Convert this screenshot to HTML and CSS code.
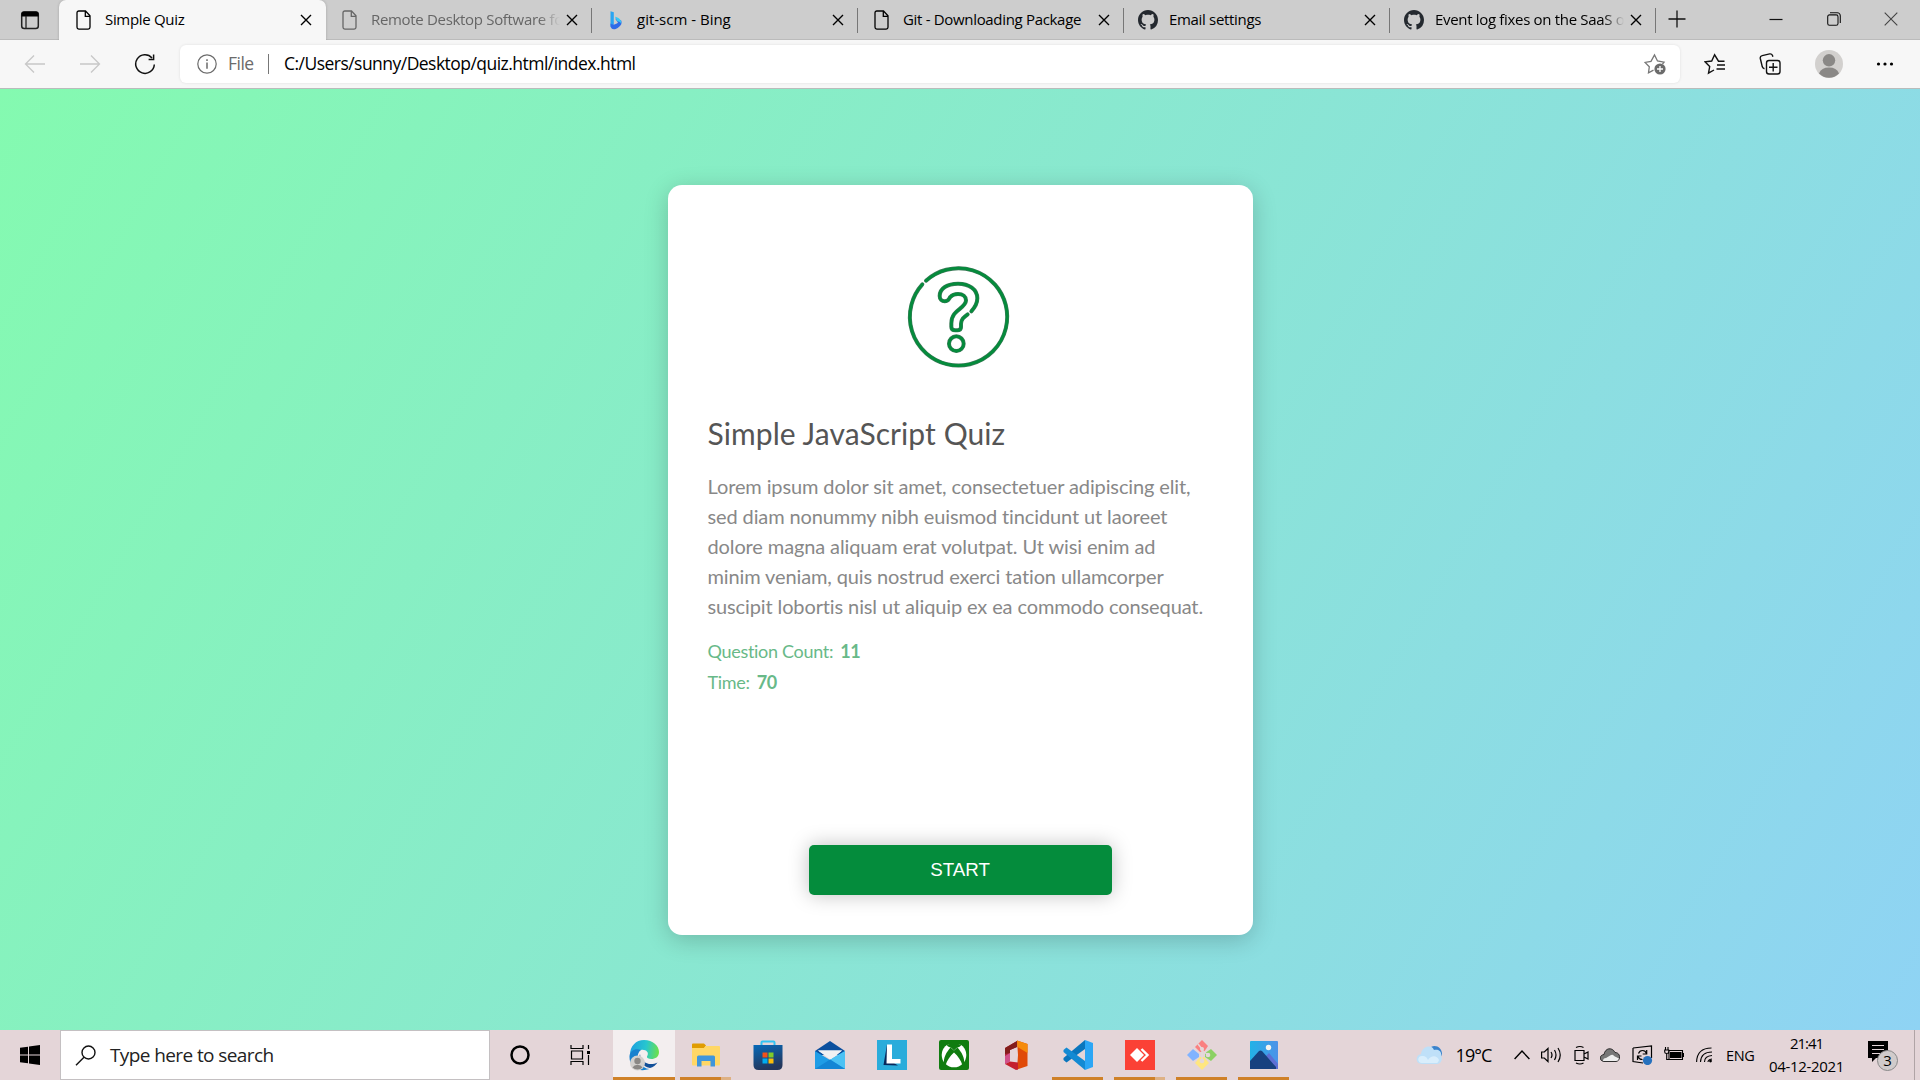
FILE: index.html
```html
<!DOCTYPE html>
<html lang="en">
<head>
<meta charset="utf-8">
<title>Simple Quiz</title>
<link rel="stylesheet" href="styles.css">
</head>
<body>
<svg class="defs" width="0" height="0">
  <defs>
    <symbol id="i-page" viewBox="0 0 20 20"><path d="M4.8 1h6.7L16 5.8V17.300a1.800 1.800 0 0 1-1.800 1.800H4.800A1.800 1.800 0 0 1 3 17.300V2.800A1.800 1.800 0 0 1 4.800 1zM11.300 1.200V6.300H16" fill="none" stroke="currentColor" stroke-width="1.300"/></symbol>
    <symbol id="i-close" viewBox="0 0 12 12"><path d="M1 1l10 10M11 1L1 11" stroke="currentColor" stroke-width="1.400" fill="none"/></symbol>
    <symbol id="i-bing" viewBox="0 0 20 20"><path d="M4.500 1.200l3.300 1.100v12l-3.300 3z" fill="#2aa5f2"/><path d="M4.500 13.500c2 2 5 1 7.500-.7l-3-4.300 6.200 2.100c1.200 3.400-.9 5.600-3.500 7.300-4.200 2.600-7.200 1-7.200-3z" fill="#2f6be8"/><path d="M9 6.800c3 .8 6.600 2.400 6.300 6.600-1-1.800-2.700-1.800-4.300-2.500z" fill="#35c8f5"/></symbol>
    <symbol id="i-github" viewBox="0 0 16 16"><path fill="#24292f" d="M8 0C3.580 0 0 3.580 0 8c0 3.540 2.290 6.530 5.470 7.590.4.070.55-.17.55-.38 0-.19-.01-.82-.01-1.490-2.010.37-2.530-.49-2.690-.94-.09-.23-.48-.94-.82-1.130-.28-.15-.68-.52-.01-.53.63-.01 1.080.58 1.230.82.72 1.210 1.870.87 2.330.66.07-.52.28-.87.51-1.070-1.780-.2-3.640-.89-3.640-3.950 0-.87.31-1.590.82-2.150-.08-.2-.36-1.020.08-2.120 0 0 .67-.21 2.200.82.64-.18 1.320-.27 2-.27s1.360.09 2 .27c1.530-1.040 2.200-.82 2.200-.82.44 1.100.16 1.920.08 2.120.51.56.82 1.270.82 2.150 0 3.070-1.870 3.750-3.650 3.950.29.25.54.73.54 1.480 0 1.070-.01 1.930-.01 2.200 0 .21.15.46.55.38A8.010 8.010 0 0 0 16 8c0-4.420-3.580-8-8-8z"/></symbol>
    <symbol id="i-question" viewBox="0 0 480 390"><path d="M141 92A146 146 0 1 1 130 103"/><path d="M277 184C290 170 295 160 295 145C295 118 270 101 237 101C205 101 182 115 182 138C182 148 189 154 197 154C210 154 209 146 214 141C220 134 228 132 237 132C252 132 261 140 261 151C261 176 217 178 217 220V231C217 238 222 241 229 241H235C243 241 246 237 246 231V222C246 208 254 202 266 193"/><circle cx="232" cy="281" r="22"/></symbol>
  </defs>
</svg>

<header class="browser">
  <div class="tabs">
    <div class="workspaces"><svg width="20" height="20" viewBox="0 0 20 20"><rect x="1.700" y="2" width="16.600" height="16.500" rx="2.500" fill="none" stroke="#222" stroke-width="1.500"/><path d="M1.500 6V4.500A2.500 2.500 0 0 1 4 1.500h12a2.500 2.500 0 0 1 2.500 3V6.500h-17z" fill="#000"/><path d="M6 6v12" stroke="#222" stroke-width="1.300"/></svg></div>
    <div class="tab active"><svg class="fav"><use href="#i-page"/></svg><span class="label">Simple Quiz</span><svg class="x"><use href="#i-close"/></svg></div>
    <div class="tab dim"><svg class="fav"><use href="#i-page"/></svg><span class="label fade">Remote Desktop Software for</span><svg class="x"><use href="#i-close"/></svg></div>
    <div class="tab"><svg class="fav"><use href="#i-bing"/></svg><span class="label loose">git-scm - Bing</span><svg class="x"><use href="#i-close"/></svg></div>
    <div class="tab"><svg class="fav"><use href="#i-page"/></svg><span class="label">Git - Downloading Package</span><svg class="x"><use href="#i-close"/></svg></div>
    <div class="tab"><svg class="fav"><use href="#i-github"/></svg><span class="label">Email settings</span><svg class="x"><use href="#i-close"/></svg></div>
    <div class="tab"><svg class="fav"><use href="#i-github"/></svg><span class="label fade">Event log fixes on the SaaS o</span><svg class="x"><use href="#i-close"/></svg></div>
    <div class="newtab"><svg width="18" height="18" viewBox="0 0 18 18"><path d="M9 .5v17M.5 9h17" stroke="#111" stroke-width="1.300"/></svg></div>
    <div class="window-buttons">
      <svg width="14" height="14" viewBox="0 0 14 14"><path d="M.5 7.500h13" stroke="#111" stroke-width="1.200"/></svg>
      <svg width="14" height="14" viewBox="0 0 14 14"><rect x=".7" y="2.900" width="10.300" height="10.300" rx="1.800" fill="none" stroke="#111" stroke-width="1.100"/><path d="M3 .8h7.300a3 3 0 0 1 3 3V11" fill="none" stroke="#111" stroke-width="1.100"/></svg>
      <svg width="14" height="14" viewBox="0 0 14 14"><path d="M.7.7l12.600 12.600M13.300.7L.7 13.300" stroke="#444" stroke-width="1.100"/></svg>
    </div>
  </div>
  <div class="toolbar">
    <nav class="nav">
      <svg width="22" height="20" viewBox="0 0 22 20" class="off"><path d="M21 10H1.500M10 1.500L1.500 10l8.500 8.500" fill="none" stroke="currentColor" stroke-width="1.300"/></svg>
      <svg width="22" height="20" viewBox="0 0 22 20" class="off"><path d="M1 10h19.500M12 1.500l8.500 8.500-8.500 8.500" fill="none" stroke="currentColor" stroke-width="1.300"/></svg>
      <svg width="22" height="22" viewBox="0 0 22 22"><path d="M20.300 11.500A9.300 9.300 0 1 1 18 4.900M19.600 1.500v5h-5" fill="none" stroke="#111" stroke-width="1.500"/></svg>
    </nav>
    <div class="address">
      <svg width="20" height="20" viewBox="0 0 20 20"><circle cx="10" cy="10" r="9.200" fill="none" stroke="#6b6b6b" stroke-width="1.200"/><path d="M10 8.500v6.200M10 5.200v1.700" stroke="#6b6b6b" stroke-width="1.500"/></svg>
      <span class="scheme">File</span><i class="bar"></i><span class="url">C:/Users/sunny/Desktop/quiz.html/index.html</span>
      <svg class="star" width="22" height="22" viewBox="0 0 22 22"><path d="M9.500 17.200L4.500 19.800l.8-6L1 9.400l6-1.100L10.500 2l3 6 6.500 1.200-1.500 1.800" fill="none" stroke="#767676" stroke-width="1.300"/><circle cx="16" cy="16" r="5.600" fill="#6b6b6b"/><path d="M16 13v6M13 16h6" stroke="#fff" stroke-width="1.300"/></svg>
    </div>
    <div class="actions">
      <svg width="22" height="22" viewBox="0 0 22 22"><path d="M20.500 8.200h-6L10.600 1.800 7.700 8 1.200 8.900l4.500 4.600-1.200 6.700L10 17M13 12h8M12.500 16h8.500" fill="none" stroke="#111" stroke-width="1.400"/></svg>
      <svg width="22" height="22" viewBox="0 0 22 22"><path d="M5.500 15.800A3 3 0 0 1 3.300 13.800L1.300 5.500a2.500 2.500 0 0 1 1.900-2.900l7.500-1.700a2.500 2.500 0 0 1 2.700 1.400l.5 1.400" fill="none" stroke="#111" stroke-width="1.400"/><rect x="7.500" y="7.500" width="13.500" height="13.500" rx="2.500" fill="none" stroke="#111" stroke-width="1.400"/><path d="M14.200 10v8.500M10 14.200h8.500" stroke="#111" stroke-width="1.400"/></svg>
      <svg width="28" height="28" viewBox="0 0 28 28"><circle cx="14" cy="14" r="14" fill="#d2d0ce"/><circle cx="14" cy="10.300" r="6.200" fill="#8a8886"/><path d="M4 23.500a10.500 8.500 0 0 1 20 0 14 14 0 0 1-20 0z" fill="#8a8886"/></svg>
      <svg width="18" height="6" viewBox="0 0 18 6"><circle cx="2.500" cy="3" r="1.600"/><circle cx="9" cy="3" r="1.600"/><circle cx="15.500" cy="3" r="1.600"/></svg>
    </div>
  </div>
</header>

<main class="page">
  <section class="card">
    <svg class="question" width="160" height="130"><use class="edge" href="#i-question"/><use class="core" href="#i-question"/></svg>
    <h1>Simple JavaScript Quiz</h1>
    <p>Lorem ipsum dolor sit amet, consectetuer adipiscing elit,<br>sed diam nonummy nibh euismod tincidunt ut laoreet<br>dolore magna aliquam erat volutpat. Ut wisi enim ad<br>minim veniam, quis nostrud exerci tation ullamcorper<br>suscipit lobortis nisl ut aliquip ex ea commodo consequat.</p>
    <div class="info"><span>Question Count:</span><b>11</b></div>
    <div class="info"><span>Time:</span><b>70</b></div>
    <button class="start">START</button>
  </section>
</main>

<footer class="taskbar">
  <div class="win"><svg width="20" height="20" viewBox="0 0 20 20"><path d="M0 2.800L8 1.700V9.500H0zM9 1.500L20 0v9.500H9zM0 10.500h8v7.800L0 17.200zM9 10.500h11V20L9 18.500z"/></svg></div>
  <div class="search"><svg width="21" height="21" viewBox="0 0 21 21"><circle cx="13.500" cy="7.500" r="6.500" fill="none" stroke="#111" stroke-width="1.400"/><path d="M9 12.300L1 20.300" stroke="#111" stroke-width="1.500"/></svg><span>Type here to search</span></div>
  <div class="sys"><svg width="20" height="20" viewBox="0 0 20 20"><circle cx="10" cy="10" r="8.500" fill="none" stroke="#000" stroke-width="2.500"/></svg></div>
  <div class="sys"><svg width="21" height="20" viewBox="0 0 21 20"><path d="M1 0v3.500h12V0M1 20v-3.500h12V20M1.500 6h11v8h-11zM18.500 0v4M18.500 10v10" fill="none" stroke="#000" stroke-width="1.200"/><path d="M17 6h3v3h-3z"/></svg></div>
  <div class="apps">
    <div class="app on"><svg width="32" height="32" viewBox="0 0 32 32"><defs><linearGradient id="eg" x1="0" y1=".3" x2="1" y2=".4"><stop offset="0" stop-color="#1c9fe0"/><stop offset=".55" stop-color="#27c6cf"/><stop offset="1" stop-color="#6be04c"/></linearGradient></defs><path d="M2 16C2 7 8 1 16 1c9 0 15 6 15 12 0 5-4 7-7.500 7-3 0-5-1-4.500-2.500C22 13 17 10 13 11 6 12 2 14 2 16z" fill="url(#eg)"/><path d="M1.500 17C2 11 8 9 13 11c-4 3-4 8-1.500 12 2 4 6 7 10 7C9 34 1 27 1.500 17z" fill="#1781cf"/><path d="M12 15c-2 5 2 13 10 14 3-.5 6-3 7.500-5.500-8 4-17 0-17.500-8.500z" fill="#124f98"/><circle cx="9.500" cy="24" r="7.500" fill="#d2d0ce"/><circle cx="9.500" cy="22" r="3.200" fill="#8a8886"/><path d="M4.500 28.500a5.500 4.500 0 0 1 10 0 7 7 0 0 1-10 0z" fill="#8a8886"/></svg></div>
    <div class="app open multi"><svg width="28" height="24" viewBox="0 0 28 24"><path d="M0 1.500Q0 .500 1 .500h11l2 2-2 3H0z" fill="#e09c00"/><path d="M0 5h12l1.500-2H27q1 0 1 1v17.500q0 1-1 1H1q-1 0-1-1z" fill="#ffd766"/><path d="M5 23.500V14q0-1.500 1.500-1.500h15Q23 12.500 23 14v9.500h-4.500V18h-9v5.500z" fill="#3f96dc"/></svg></div>
    <div class="app"><svg width="30" height="30" viewBox="0 0 30 30"><defs><linearGradient id="st" x1="0" y1="0" x2=".3" y2="1"><stop stop-color="#0669b9"/><stop offset="1" stop-color="#24375c"/></linearGradient></defs><path d="M8.500 6V2.500q0-1 1-1h11q1 0 1 1V6" fill="none" stroke="#31c4f3" stroke-width="2"/><path d="M.5 5h29v20q0 5-5 5h-19q-5 0-5-5z" fill="url(#st)"/><path fill="#f1511b" d="M9.500 12.500h5v5h-5z"/><path fill="#80cc28" d="M15.500 12.500h5v5h-5z"/><path fill="#00adef" d="M9.500 18.500h5v5h-5z"/><path fill="#fbbc09" d="M15.500 18.500h5v5h-5z"/></svg></div>
    <div class="app"><svg width="30" height="28" viewBox="0 0 30 28"><path d="M0 10L15 0l15 10v4H0z" fill="#0b4f9e"/><path d="M3 9.500h24L16 19z" fill="#f0f1f3"/><path d="M0 10l15 9 15-9v18H0z" fill="#1f9de6"/><path d="M15 18.500L30 10v18z" fill="#4cc2f4"/><path d="M3 9.500h24L16 18z" fill="#f0f1f3"/><path d="M0 28L15 18.500 30 28z" fill="#1386d5"/></svg></div>
    <div class="app"><svg width="30" height="30" viewBox="0 0 30 30"><path fill="#29acdb" d="M0 0h30v30H0z"/><path d="M10 4.500L6.500 25 21 25.500 12 20z" fill="#06285c"/><path d="M10 4.500h5V19h8.500v4.500H9.500z" fill="#fff"/></svg></div>
    <div class="app"><svg width="30" height="30" viewBox="0 0 30 30"><rect width="30" height="30" rx="2" fill="#107c10"/><circle cx="15" cy="15" r="12.300" fill="#fff"/><path d="M7 4.500Q11 3.500 15 6q4-2.500 8-1.500l-2-2.500H9zM15 6Q11 3.500 7.500 4.800L9 6.500q4 1 6 4 2-3 6-4l1.500-1.700Q19 3.500 15 6z" fill="#107c10"/><path d="M11.500 7.500C7.500 12 4 18 5 24l1.500 1.500C8 20.500 11 16 15 12.500c4 3.500 7 8 8.500 13L25 24c1-6-2.500-12-6.500-16.500L15 10.500z" fill="#107c10"/></svg></div>
    <div class="app"><svg width="24" height="30" viewBox="0 0 24 30"><path d="M1 8L13 1v6L6 10v11l-5 3z" fill="#b3243b"/><path d="M1 8L13 1v6L6 10v3L1 14z" fill="#831d1b"/><path d="M13 .5L23.500 4v22L13 29.500 14 15z" fill="#e04a08"/><path d="M13 .5L23.500 4v9L13.500 7z" fill="#f58b0b"/><path d="M1 24l5-2.500 8 1V29.500L12 30z" fill="#c4202d"/><path d="M1 16l5-3v8.500L1 24z" fill="#d0518a"/></svg></div>
    <div class="app open"><svg width="30" height="30" viewBox="0 0 30 30"><path d="M22 0l8 3v24l-8 3z" fill="#2ba6f5"/><path d="M22 0v9L3.500 22.500.5 20v-2z" fill="#0a76bd"/><path d="M22 30v-9L3.500 7.500.5 10v2z" fill="#138ad3"/></svg></div>
    <div class="app open multi"><svg width="30" height="30" viewBox="0 0 30 30"><path fill="#fb4136" d="M0 0h30v30H0z"/><path d="M12 8l7 7-7 7-7-7z" fill="#fff"/><path d="M16.500 9l6 6-6 6" fill="none" stroke="#fff" stroke-width="2.400"/></svg></div>
    <div class="app open"><svg width="30" height="30" viewBox="0 0 30 30"><path d="M15 0l6 6-4 6h-4l-5-5z" fill="#fa8080"/><path d="M24 9l6 6-6 6-6-4v-4z" fill="#8bd163"/><path d="M6 9l6 5v3l-6 4-6-6z" fill="#80b3ff"/><path d="M13 17h4l5 6-7 7-7-7z" fill="#ffe680"/><path d="M11 4l4 5v12M15 10l6 5" fill="none" stroke="#e5d8da" stroke-width="1.500"/><circle cx="15" cy="9" r="2" fill="#e5d8da"/><circle cx="15" cy="21" r="2.300" fill="#e5d8da"/><circle cx="21" cy="15" r="2.300" fill="#e5d8da"/></svg></div>
    <div class="app open"><svg width="28" height="28" viewBox="0 0 28 28"><defs><linearGradient id="ph"><stop stop-color="#22b2e7"/><stop offset="1" stop-color="#4d92e8"/></linearGradient></defs><rect width="28" height="28" rx="1" fill="url(#ph)"/><path d="M28 23L19 12l-5 5 8 11h6z" fill="#5d6fd4"/><path d="M0 20L9 10q1.500-1 3 0L26 26v2H0z" fill="#17417f"/><circle cx="18.500" cy="6.500" r="2.700" fill="#f4f4f0"/></svg></div>
  </div>
  <div class="tray">
    <div class="weather"><svg width="28" height="20" viewBox="0 0 28 20"><path d="M15 2c5-3 11 1 11 7l-2 5-9-7z" fill="#3a83cc"/><path d="M6 19C-1 19-1 10 5 9 6 1 16-1 18 5c5-1 8 2 7 6 2 3 0 8-4 8z" fill="#bfe0f8"/><path d="M6 18c-5 0-5-7 0-7 4 0 5 2 6 4 3-5 9-5 11 0-1 3-2 3-3 3z" fill="#d9eefc"/></svg><span>19°C</span></div>
    <svg width="16" viewBox="0 0 16 20"><path d="M.6 14L8 6l7.400 8" fill="none" stroke="#000" stroke-width="1.400"/></svg>
    <svg width="21" viewBox="0 0 21 20"><path d="M.6 7v6h2.700L7 16.500v-13L3.300 7zM10 7q2 3 0 6M13.500 5q3 5 0 10M17 3q4.500 7 0 14" fill="none" stroke="#000" stroke-width="1.200"/></svg>
    <svg width="15" viewBox="0 0 15 20"><path d="M1 5.500h9v10H1zM10 9l4-2v7l-4-2M2 2.500q4-2 7.500 0M2 18q4 2 7.500 0" fill="none" stroke="#000" stroke-width="1.200"/></svg>
    <svg width="20" viewBox="0 0 20 20"><path d="M4 16.500C-1 16-1 10 4 9.500 5 3 12 1.500 15 7.500c6 0 6 8.500 1 9z" fill="#777" stroke="#111" stroke-width=".8"/><path d="M3 16q0-3 3-3l5-3q2-1 3 1l5 2.500q-1 2.500-3 2.500z" fill="#eee"/></svg>
    <svg width="21" viewBox="0 0 21 20"><path d="M1 3l18.500-2v12M1 3v13.500l10 1.500" fill="none" stroke="#000" stroke-width="1.200"/><path d="M6.500 8.500q1-3 4-3t4 3M14.700 5v4h-4M5.500 15v-4h4M6 11.500q1 3 4.500 3" fill="none" stroke="#000" stroke-width="1.200"/><circle cx="15.500" cy="15.500" r="4.600" fill="#2671be"/></svg>
    <svg width="20" viewBox="0 0 20 20"><path d="M5 5.500h13.500v9H5zM19.500 8v4M1.500 2v3M4 2v3M.7 5h4v2q0 1.500-2 1.500t-2-1.500zM2.700 8.500v6H5" fill="none" stroke="#000" stroke-width="1.100"/><path d="M6 7h11.500v6H6z"/></svg>
    <svg width="17" viewBox="0 0 17 20"><path d="M.6 17Q1 3 15.500 3M4.500 17Q5 7 16 7M8.500 17q0-6 7.500-6.500M12 17q0-2.500 4-3" fill="none" stroke="#000" stroke-width="1.100"/><circle cx="14.500" cy="16" r="1.400"/></svg>
    <span class="lang">ENG</span>
    <div class="clock"><span class="time">21:41</span><span>04-12-2021</span></div>
    <svg class="notes" width="32" viewBox="0 0 32 32"><path d="M0 2h20v17H8l-4 4v-4H0z"/><path d="M4 6.500h12M4 10.500h12M4 14.500h8" stroke="#e4d5d8" stroke-width="1.200"/><circle cx="19.500" cy="21.500" r="10" fill="#d0cbcb" stroke="#888" stroke-width="1"/><text x="19.500" y="27" text-anchor="middle" class="count">3</text></svg>
    <i class="peek"></i>
  </div>
</footer>
</body>
</html>
```
FILE: styles.css
```css
* { box-sizing: border-box; }
body { margin: 0; width: 1920px; height: 1080px; overflow: hidden; display: flex; flex-direction: column; font-family: "Open Sans", "Noto Sans", sans-serif; color: #000; white-space: nowrap; }
svg { display: block; flex: none; }
.defs { position: absolute; }

/* browser chrome */
.browser { height: 89px; flex: none; background: #f7f7f7; border-bottom: 1px solid #b9bcbb; }
.tabs { height: 40px; display: flex; background: #cdcdcd; border-bottom: 1px solid #bbb; font-size: 15px; }
.workspaces { width: 59px; padding: 10px 0 0 20px; }
.tab { width: 266px; height: 39px; flex: none; display: flex; align-items: center; padding: 0 14px; position: relative; }
.tab:not(.active)::after { content: ""; position: absolute; right: 0; top: 8px; width: 1px; height: 25px; background: #777; }
.tab.active { width: 267px; height: 40px; background: #f7f7f7; border-radius: 7px 7px 0 0; padding: 0 14px 1px 15px; box-shadow: 0 0 3px rgba(0,0,0,.2); clip-path: inset(0 -4px); }
.fav { width: 20px; height: 20px; }
.tab.dim .fav, .tab.dim .label { color: #666; }
.label { flex: 1; min-width: 0; margin-left: 11px; overflow: hidden; line-height: 24px; padding-bottom: 2px; letter-spacing: -.32px; }
.label.loose { letter-spacing: 0; }
.fade { -webkit-mask-image: linear-gradient(90deg, #000 88%, transparent 99%); margin-right: 4px; }
.x { width: 12px; height: 12px; }
.newtab { padding: 10px 0 0 12px; }
.window-buttons { display: flex; gap: 43.500px; margin-left: auto; padding: 12px 22px 0 0; }
.toolbar { height: 48px; display: flex; align-items: center; }
.nav { display: flex; align-items: center; width: 180px; padding-left: 24px; gap: 33px; }
.off { color: #c8c8c8; }
.address { width: 1500px; height: 38px; background: #fff; border-radius: 6px; display: flex; align-items: center; padding: 0 14px 0 17px; font-size: 17.500px; box-shadow: 0 0 3px rgba(0,0,0,.1); }
.scheme, .url { padding-bottom: 2px; letter-spacing: -.53px; }
.scheme { color: #6b6b6b; margin-left: 11px; width: 29px; }
.bar { width: 1px; height: 20px; background: #777; margin: 0 15px 0 11px; }
.star { margin-left: auto; }
.actions { flex: 1; display: flex; align-items: center; justify-content: space-between; padding: 0 26px 0 24px; }

/* quiz page */
.page { height: 941px; flex: none; background: linear-gradient(120deg, #84fab0 0%, #8fd3f4 100%); display: flex; justify-content: center; align-items: flex-start; padding-top: 96px; }
.card { width: 585px; height: 750px; background: #fff; border-radius: 14px; box-shadow: 0 5px 25px rgba(0,0,0,.2); padding: 65px 39px 0 40px; font-family: Lato, sans-serif; display: flex; flex-direction: column; }
.question { align-self: center; margin-right: 3px; fill: none; stroke-linecap: round; }
.edge { stroke: #3f7a5a; stroke-width: 12px; }
.core { stroke: #058b3c; stroke-width: 8.500px; }
h1 { margin: 34px 0 0; font-size: 30px; line-height: 38px; font-weight: 400; color: #555; letter-spacing: .08px; }
.card p { margin: 19px 0 15px; font-size: 20px; line-height: 30px; color: #888; letter-spacing: -.12px; }
.info { display: flex; gap: 7px; font-size: 18px; line-height: 31px; color: #68b988; letter-spacing: -.3px; }
.info b { letter-spacing: -.4px; }
.start { margin: auto auto 40px; width: 303px; height: 50px; border: 0; border-radius: 5px; padding: 0 1px 1px 0; background: #048c3c; color: #fff; font: 18.750px "Liberation Sans", sans-serif; box-shadow: 0 0 20px rgba(0,0,0,.25); }

/* desktop taskbar */
.taskbar { height: 50px; flex: none; background: #e4d5d8; display: flex; }
.win { width: 60px; padding: 15px 0 0 20px; }
.search { width: 430px; background: #fff; border: 1px solid #c4c0c2; display: flex; align-items: center; padding-left: 14px; gap: 14px; font-size: 19px; letter-spacing: -.6px; color: #222; }
.sys { width: 60px; display: flex; align-items: center; justify-content: center; }
.apps { display: flex; margin-left: 2.500px; }
.app { width: 62px; display: flex; align-items: center; justify-content: center; background: no-repeat 50% 100% / 51px 3px; }
.on { background: #f3eeef; border-bottom: 3px solid #cf8128; padding-top: 3px; }
.open { background-image: linear-gradient(#cf8128, #cf8128); }
.multi { background-image: linear-gradient(90deg, #cf8128 80%, #deb184 80%); }
.tray { flex: 1; display: flex; align-items: center; }
.tray > svg { height: 20px; margin-right: 11.500px; }
.weather { display: flex; align-items: center; gap: 12px; width: 98px; margin-left: 121px; font-size: 18px; letter-spacing: -.9px; }
.lang { font-size: 14.500px; letter-spacing: -.4px; width: 28px; margin-left: 2px; }
.clock { width: 80px; margin-left: 12.500px; font-size: 15px; line-height: 23px; letter-spacing: -.33px; display: flex; flex-direction: column; align-items: center; }
.time { letter-spacing: -1px; }
.tray > .notes { height: 32px; margin: 0 0 0 21px; }
.count { font-size: 15px; }
.peek { width: 1px; height: 50px; background: #b0a4a6; margin-left: auto; margin-right: 5px; }
```
